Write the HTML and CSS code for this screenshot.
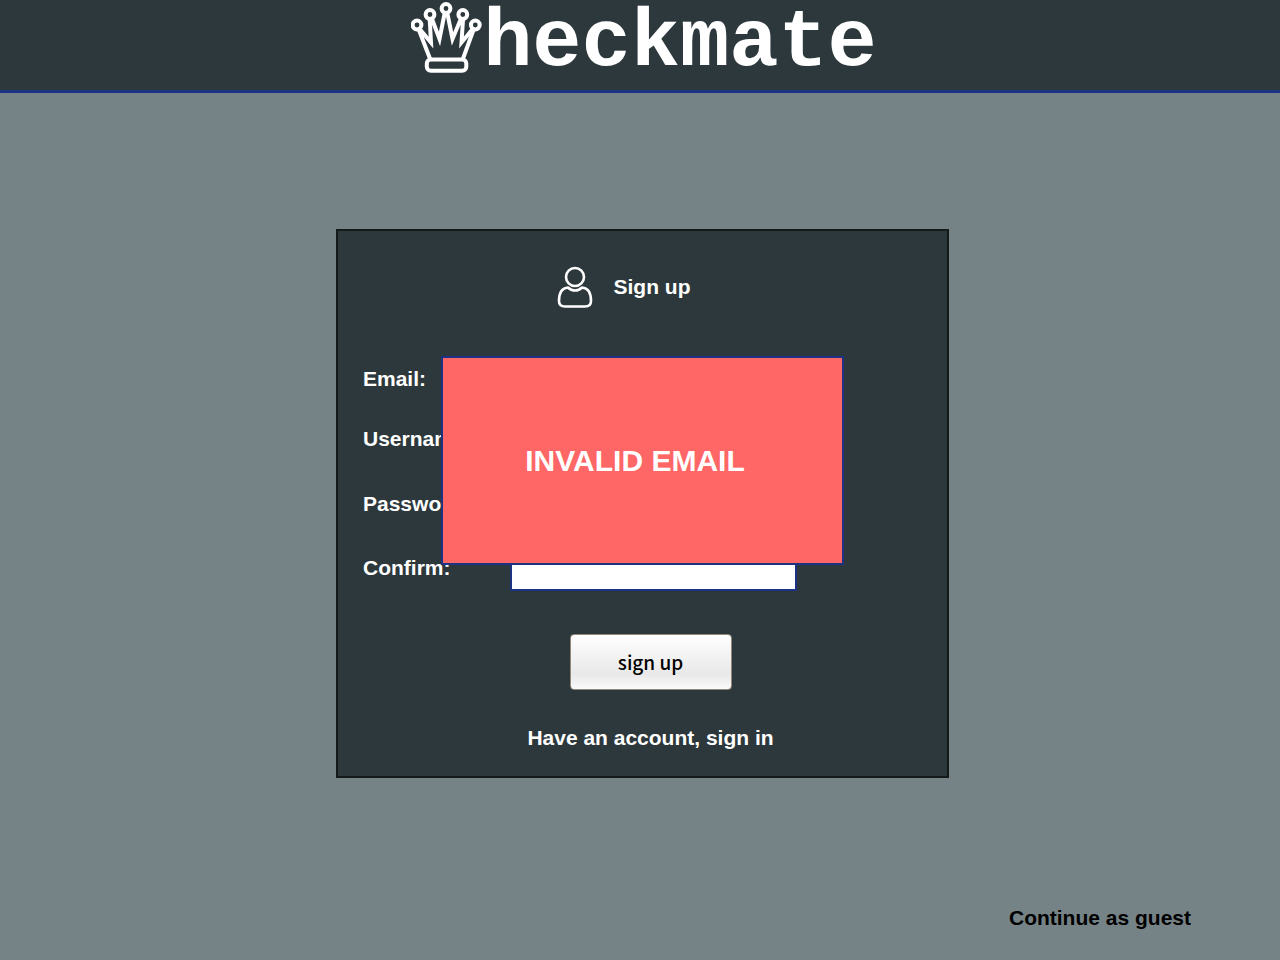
FILE: index.html
```html
<!DOCTYPE html>
<html lang="en">
<head>
<meta charset="utf-8">
<meta name="viewport" content="width=device-width, initial-scale=1">
<title>Checkmate</title>
<link rel="stylesheet" href="styles.css">
</head>
<body>
<header class="site-header">
  <h1 class="logo">
    <svg class="logo-crown" viewBox="0 0 72 72" role="img" aria-label="C">
      <g fill="none" stroke="#fff" stroke-width="4">
        <path stroke-linejoin="miter" stroke-miterlimit="12" d="M19.5 58 L6 23 M7 25 L20 40.5 L18.5 13 M19.5 13 L28.5 37 L34.5 7 M35.5 7 L41.5 37 L51.5 13 M52.3 13 L50.5 40.5 L63.3 25 M64.3 23 L51.5 58"/>
        <g fill="#2d383c">
          <circle cx="6" cy="23" r="4.4"/>
          <circle cx="19" cy="12.5" r="4.4"/>
          <circle cx="35" cy="6.5" r="4.4"/>
          <circle cx="51.8" cy="12.5" r="4.4"/>
          <circle cx="64.3" cy="23" r="4.4"/>
          <rect x="15.8" y="57.5" width="39.5" height="11.3" rx="4"/>
        </g>
      </g>
    </svg>
    <span class="logo-text">heckmate</span>
  </h1>
</header>
<main class="page">
  <section class="card">
    <h2 class="card-title">
      <svg class="user-icon" viewBox="0 0 36 42" aria-hidden="true">
        <g fill="none" stroke="#fff" stroke-width="2.6" stroke-linejoin="round">
          <circle cx="18" cy="11" r="9"/>
          <path d="M11 21.5 C4 22 2 27 2 35 C2 38.5 4 40.5 8 40.5 H28 C32 40.5 34 38.5 34 35 C34 27 32 22 25 21.5 C21 25.5 15 25.5 11 21.5 Z"/>
        </g>
      </svg>
      <span>Sign up</span>
    </h2>
    <form class="form">
      <div class="fields">
        <label for="email">Email:</label>
        <input id="email" type="email">
        <label for="username">Username:</label>
        <input id="username" type="text">
        <label for="password">Password:</label>
        <input id="password" type="password">
        <label for="confirm">Confirm:</label>
        <input id="confirm" type="password">
      </div>
      <div class="actions">
        <button class="submit" type="button">sign up</button>
        <a class="sign-in" href="#">Have an account, sign in</a>
      </div>
    </form>
    <div class="alert" role="alert">INVALID EMAIL</div>
  </section>
  <a class="guest" href="#">Continue as guest</a>
</main>
</body>
</html>
```

FILE: styles.css
```css
* {
  box-sizing: border-box;
}

body {
  margin: 0;
  min-height: 100vh;
  display: flex;
  flex-direction: column;
  background: #768386;
  color: #fff;
  font: bold 21px/24px "Liberation Sans", Arial, sans-serif;
}

a {
  color: inherit;
  text-decoration: none;
}

.site-header {
  padding: 2px 0 4px 8px;
  background: #2d383c;
  border-bottom: 3px solid #1c3282;
}

.logo {
  display: flex;
  align-items: flex-start;
  justify-content: center;
  margin: 0;
}

.logo-crown {
  width: 72px;
  height: 72px;
}

.logo-text {
  font: bold 82px/84px "Courier 10 Pitch", "Courier New", "Liberation Mono", monospace;
}

.page {
  flex: 1;
  display: flex;
  flex-direction: column;
  align-items: center;
  padding: 136px 0 30px 5px;
}

.card {
  position: relative;
  width: 613px;
  max-width: 100%;
  padding: 35px 25px 26px;
  background: #2d383c;
  border: 2px solid #14191a;
}

.card-title {
  display: flex;
  align-items: center;
  justify-content: center;
  gap: 21px;
  margin: 0 38px 48px 0;
  font-size: 21px;
}

.user-icon {
  width: 36px;
  height: 42px;
}

.fields {
  display: grid;
  grid-template-columns: 147px 287px;
  grid-template-rows: 60px 65px 64px 46px;
  align-items: start;
}

.fields label {
  line-height: 46px;
}

.fields input {
  width: 100%;
  height: 46px;
  padding: 0 8px;
  background: #fff;
  border: 2px solid #1c3282;
  border-radius: 0;
  font: inherit;
}

.actions {
  display: flex;
  flex-direction: column;
  align-items: center;
  gap: 36px;
  margin: 43px 0 0 16px;
}

.submit {
  width: 162px;
  height: 56px;
  border: 1px solid #92887a;
  border-radius: 4px;
  background: linear-gradient(#fff, #e8e8e8 72%, #fafafa);
  color: #000;
  font: 500 19px/24px "Noto Sans CJK JP", "Noto Sans", sans-serif;
}

.alert {
  position: absolute;
  top: 125px;
  left: 103px;
  display: flex;
  align-items: center;
  justify-content: center;
  width: 403px;
  height: 209px;
  padding-right: 15px;
  background: #f66;
  border: 2px solid #1c3282;
  font-size: 30px;
}

.guest {
  align-self: flex-end;
  margin: auto 89px 0 0;
  color: #000;
}
```
